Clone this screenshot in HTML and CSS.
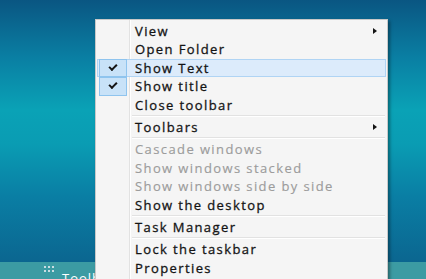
FILE: index.html
```html
<!DOCTYPE html>
<html lang="en">
<head>
    <meta charset="UTF-8">
    <meta name="viewport" content="width=device-width, initial-scale=1.0">
    <title>Taskbar menu</title>
    <link rel="stylesheet" href="styles.css">
</head>
<body>
    <div class="desktop">
        <div class="wallpaper"></div>
        <div class="taskbar">
            <span class="grip">
                <i></i><i></i><i></i><i></i><i></i><i></i>
            </span>
            <span class="tb-label">Toolbar</span>
        </div>
    </div>

    <ul class="menu">
        <li class="item has-sub">View</li>
        <li class="item">Open Folder</li>
        <li class="item checked active">Show Text</li>
        <li class="item checked">Show title</li>
        <li class="item">Close toolbar</li>
        <li class="sep"></li>
        <li class="item has-sub">Toolbars</li>
        <li class="sep"></li>
        <li class="item disabled">Cascade windows</li>
        <li class="item disabled">Show windows stacked</li>
        <li class="item disabled">Show windows side by side</li>
        <li class="item">Show the desktop</li>
        <li class="sep"></li>
        <li class="item">Task Manager</li>
        <li class="sep"></li>
        <li class="item">Lock the taskbar</li>
        <li class="item">Properties</li>
    </ul>
</body>
</html>
```

FILE: styles.css
```css
body {
    margin: 0;
    padding: 0;
    width: 426px;
    height: 279px;
    overflow: hidden;
    position: relative;
    font-family: "Open Sans", "DejaVu Sans", sans-serif;
}

.desktop {
    display: flex;
    flex-direction: column;
    height: 279px;
}

.wallpaper {
    flex: 1;
    background: linear-gradient(180deg, #0a5682 0%, #0a7fa3 22%, #0aa2b6 42%, #0a9cb3 55%, #0a7ea4 75%, #0b6690 100%);
}

.taskbar {
    height: 17px;
    background-color: #3c9ba3;
    display: flex;
    align-items: flex-start;
    padding-left: 44px;
    gap: 8px;
}

.grip {
    display: grid;
    grid-template-columns: repeat(3, 2px);
    gap: 2px;
    margin-top: 4px;
}

.grip i {
    width: 2px;
    height: 2px;
    background-color: #c9dde3;
}

.tb-label {
    color: #ffffff;
    font-size: 13px;
    line-height: 13px;
    margin-top: 10px;
    letter-spacing: 1px;
}

.menu {
    position: absolute;
    left: 95px;
    top: 19px;
    width: 291px;
    height: 280px;
    margin: 0;
    padding: 2px 0 0 0;
    list-style: none;
    background-color: #f5f5f5;
    border: 1px solid #c8c8c8;
    box-shadow: 2px 2px 3px rgba(0, 0, 0, 0.35);
    background-image: linear-gradient(90deg, transparent 33px, #e2e2e2 33px, #e2e2e2 34px, #ffffff 34px, #ffffff 35px, transparent 35px);
}

.item {
    position: relative;
    height: 18.4px;
    line-height: 17px;
    padding-left: 37px;
    font-size: 13px;
    font-weight: 400;
    letter-spacing: 1.4px;
    color: #141414;
    -webkit-text-stroke: 0.3px #141414;
    margin: 0 1px;
    box-sizing: border-box;
    border: 1px solid transparent;
}

.item.disabled {
    color: #9c9c9c;
    -webkit-text-stroke: 0.15px #9c9c9c;
}

.item.active {
    background-color: #dcebfb;
    border-color: #b0d4f4;
}

.item.checked::before {
    content: "";
    position: absolute;
    left: 1px;
    top: -1px;
    width: 28px;
    height: 18.4px;
    box-sizing: border-box;
    background-color: #c8e2f8;
    border: 1px solid #8fc4ee;
}

.item.checked::after {
    content: "";
    position: absolute;
    left: 11px;
    top: 4px;
    width: 6px;
    height: 3px;
    border-left: 2px solid #141414;
    border-bottom: 2px solid #141414;
    transform: rotate(-45deg);
}

.item.has-sub::after {
    content: "";
    position: absolute;
    right: 8px;
    top: 5px;
    border-left: 4px solid #141414;
    border-top: 3px solid transparent;
    border-bottom: 3px solid transparent;
}

.sep {
    height: 1px;
    margin: 1px 2px 1px 36px;
    background-color: #e2e2e2;
    border-bottom: 1px solid #ffffff;
}
```
